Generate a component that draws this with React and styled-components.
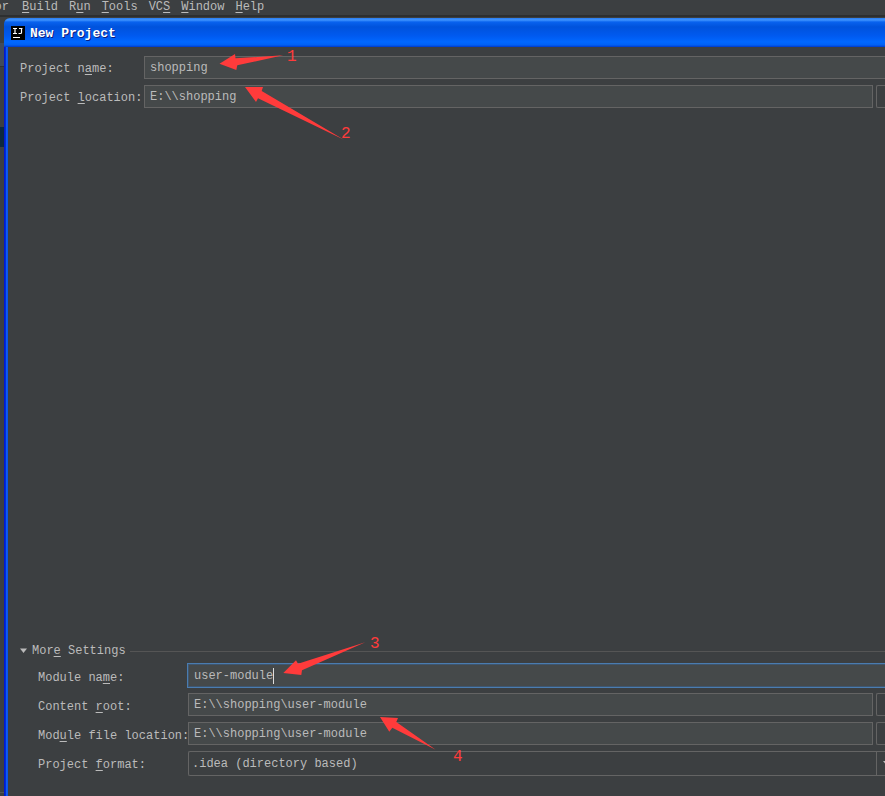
import styled, { createGlobalStyle } from 'styled-components'

const colors = {
  background: '#3c3f41',
  field: '#45494a',
  border: '#646464',
  focus: '#4a7cb0',
  focusInner: '#3f566e',
  text: '#bbbbbb',
  mark: '#ff3b3b',
}

const GlobalStyle = createGlobalStyle`
  * {
    box-sizing: border-box;
  }
  body {
    margin: 0;
    background: ${colors.background};
    color: ${colors.text};
    font: 12px/16px 'Liberation Mono', monospace;
  }
  button, input, select {
    font: inherit;
    color: inherit;
  }
`

const Screen = styled.div`
  display: flex;
  flex-direction: column;
  height: 100vh;
  overflow: hidden;
`

const MenuBar = styled.nav`
  display: flex;
  gap: 11px;
  flex: none;
  height: 17px;
  align-items: flex-start;
  line-height: 14px;
  border-bottom: 2px solid #2d2f30;
`

const MenuItem = styled.button`
  display: flex;
  justify-content: flex-end;
  flex: none;
  width: ${({ $clipped }) => ($clipped ? '11px' : 'auto')};
  padding: 0;
  padding-right: ${({ $clipped }) => ($clipped ? '2px' : 0)};
  border: 0;
  background: none;
`

const Mnemonic = styled.u`
  text-underline-offset: 2px;
  text-decoration-thickness: 1px;
`

const Workspace = styled.div`
  display: flex;
  flex: 1;
  min-height: 0;
`

const Gutter = styled.div`
  display: flex;
  flex-direction: column;
  flex: none;
  width: 4px;
  padding-top: 26px;

  &:after {
    content: '';
    height: 3px;
    margin-top: auto;
    border-top: 1px solid #555555;
  }
`

const GutterTab = styled.div`
  height: 24px;
  background: #414b5b;
  border-bottom: 1px solid #2f3133;
`

const GutterSelection = styled.div`
  height: 20px;
  margin-top: 60px;
  background: #0d293e;
`

const Dialog = styled.section`
  display: flex;
  flex-direction: column;
  flex: 1;
  min-width: 0;
  position: relative;
  margin-top: 1px;
`

const TitleBar = styled.header`
  display: flex;
  align-items: center;
  gap: 5px;
  flex: none;
  height: 29px;
  padding-left: 7px;
  border-radius: 6px 0 0 0;
  background: linear-gradient(
    #2a7cf0 0,
    #3f94ff 2px,
    #0862ee 4px,
    #0052dc 9px,
    #005af0 18px,
    #0068ff 24px,
    #0060f4 27px,
    #0038c8 29px
  );
`

const Title = styled.h1`
  margin: 0;
  padding-top: 2px;
  font-size: 13px;
  line-height: 16px;
  color: #ffffff;
  text-shadow: 1px 1px 0 #0a1c80;
`

const Content = styled.form`
  display: flex;
  flex-direction: column;
  flex: 1;
  min-height: 0;
  padding: 9px 0 20px 12px;
  border-left: 4px solid;
  border-image: linear-gradient(
      to right,
      #0014c8 0,
      #0030e0 2px,
      #1060f4 2px,
      #0a50e8 4px
    )
    4;
`

const Rows = styled.div`
  display: flex;
  flex-direction: column;
  gap: 6px;
  padding-left: ${({ $indent }) => ($indent ? '18px' : 0)};
`

const Row = styled.div`
  display: flex;
`

const Label = styled.label`
  flex: none;
  width: ${({ $wide }) => ($wide ? '150px' : '124px')};
  height: 23px;
  padding-top: ${({ $wide }) => ($wide ? '6px' : '5px')};
  white-space: nowrap;
`

const FieldBox = styled.div`
  position: relative;
  flex: 1;
  min-width: 0;
`

const Field = styled.input`
  display: block;
  width: 100%;
  height: 23px;
  padding: 0 5px;
  border: 1px solid
    ${({ $focused }) => ($focused ? colors.focusInner : colors.border)};
  border-right-width: ${({ $cut }) => ($cut ? 0 : '1px')};
  border-radius: 0;
  outline: 0;
  box-shadow: ${({ $focused }) =>
    $focused ? `0 0 0 1px ${colors.focus}` : 'none'};
  background: ${colors.field};
`

const Caret = styled.span`
  position: absolute;
  top: 4px;
  left: calc(6px + 11ch);
  width: 1px;
  height: 16px;
  background: #dddddd;
`

const BrowseButton = styled.button`
  flex: none;
  width: 9px;
  height: 23px;
  margin-left: 3px;
  padding: 0;
  border: 1px solid ${colors.border};
  border-right: 0;
  border-radius: 2px 0 0 2px;
  background: ${colors.background};
`

const Select = styled.select`
  appearance: none;
  display: block;
  width: 100%;
  height: 25px;
  padding: 0 12px 0 3px;
  border: 1px solid ${colors.border};
  border-right: 0;
  border-radius: 2px 0 0 2px;
  outline: 0;
  background: ${colors.background};
`

const SelectArrow = styled.span`
  display: flex;
  align-items: center;
  position: absolute;
  top: 0;
  right: 0;
  width: 9px;
  height: 25px;
  padding-left: 6px;
  border-left: 1px solid ${colors.border};
  pointer-events: none;
  overflow: hidden;

  svg {
    flex: none;
  }
`

const Spacer = styled.div`
  flex: 1;
`

const SectionToggle = styled.button`
  display: flex;
  align-items: center;
  gap: 4px;
  flex: none;
  margin-bottom: 5px;
  padding: 0;
  border: 0;
  background: none;

  &:after {
    content: '';
    flex: 1;
    height: 1px;
    background: #555555;
  }
`

const Mark = styled.svg`
  position: absolute;
  left: ${({ $left }) => $left}px;
  top: ${({ $top }) => ($top === undefined ? 'auto' : `${$top}px`)};
  bottom: ${({ $bottom }) => ($bottom === undefined ? 'auto' : `${$bottom}px`)};
  overflow: visible;
  pointer-events: none;
  fill: ${colors.mark};
  font: 16px 'Liberation Mono', monospace;
`

// coordinates are relative to the dialog: top marks hang from its top, the others from its bottom
const marks = [
  {
    number: 1,
    left: 215,
    top: 32,
    width: 78,
    height: 24,
    points: '0.5,13.7 16,4 16.5,8.3 64.3,5.3 18.3,15.3 17.3,20',
    x: 68,
    y: 11,
  },
  {
    number: 2,
    left: 241,
    top: 69,
    width: 110,
    height: 53,
    points: '0,0 18,0 16.7,4 99,52.7 13,11.3 11,15',
    x: 96,
    y: 51,
  },
  {
    number: 3,
    left: 279,
    bottom: 116,
    width: 100,
    height: 40,
    points: '0.3,33 13,20.3 15,23.7 82.3,2.3 19,30.3 18.3,35',
    x: 87,
    y: 8,
  },
  {
    number: 4,
    left: 376,
    bottom: 36,
    width: 86,
    height: 44,
    points: '0,1 18,2 16.3,6 55.7,33.7 12.3,11.7 9.3,15.7',
    x: 73,
    y: 45,
  },
]

const menuItems = [
  { before: 'or', clipped: true },
  { key: 'B', after: 'uild' },
  { before: 'R', key: 'u', after: 'n' },
  { key: 'T', after: 'ools' },
  { before: 'VC', key: 'S' },
  { key: 'W', after: 'indow' },
  { key: 'H', after: 'elp' },
]

function Caption({ before, letter, after }) {
  return (
    <span>
      {before}
      {letter && <Mnemonic>{letter}</Mnemonic>}
      {after}
    </span>
  )
}

function TextRow({ id, caption, value, wide, browse, focused }) {
  return (
    <Row>
      <Label htmlFor={id} $wide={wide}>
        <Caption {...caption} />
      </Label>
      <FieldBox>
        <Field
          id={id}
          defaultValue={value}
          spellCheck={false}
          $cut={!browse}
          $focused={focused}
        />
        {focused && <Caret />}
      </FieldBox>
      {browse && <BrowseButton type="button" aria-label="Browse" />}
    </Row>
  )
}

function App() {
  return (
    <Screen>
      <GlobalStyle />
      <MenuBar>
        {menuItems.map(({ before, key, after, clipped }) => (
          <MenuItem key={`${before}-${key}`} type="button" $clipped={clipped}>
            <Caption before={before} letter={key} after={after} />
          </MenuItem>
        ))}
      </MenuBar>
      <Workspace>
        <Gutter>
          <GutterTab />
          <GutterSelection />
        </Gutter>
        <Dialog>
          <TitleBar>
            <svg width="14" height="14" viewBox="0 0 14 14" aria-hidden="true">
              <rect width="14" height="14" fill="#000" />
              <path
                d="M2 2.5h4M4 2.5v5M2 7.5h4M8 2.5h3.5M10.5 2.5v4q0 1-1 1H7.5"
                fill="none"
                stroke="#fff"
                strokeWidth="1.2"
              />
              <path d="M2 11.5h7" stroke="#fff" />
            </svg>
            <Title>New Project</Title>
          </TitleBar>
          <Content onSubmit={(e) => e.preventDefault()}>
            <Rows>
              <TextRow
                id="project-name"
                caption={{ before: 'Project n', letter: 'a', after: 'me:' }}
                value="shopping"
              />
              <TextRow
                id="project-location"
                caption={{ before: 'Project ', letter: 'l', after: 'ocation:' }}
                value="E:\\shopping"
                browse
              />
            </Rows>
            <Spacer />
            <SectionToggle type="button" aria-expanded="true">
              <svg width="8" height="6" viewBox="0 0 8 6" aria-hidden="true">
                <path d="M0 0.5h7l-3.5 4.5z" fill="#bbb" />
              </svg>
              <Caption before="Mor" letter="e" after=" Settings" />
            </SectionToggle>
            <Rows $indent>
              <TextRow
                id="module-name"
                caption={{ before: 'Module na', letter: 'm', after: 'e:' }}
                value="user-module"
                wide
                focused
              />
              <TextRow
                id="content-root"
                caption={{ before: 'Content ', letter: 'r', after: 'oot:' }}
                value="E:\\shopping\user-module"
                wide
                browse
              />
              <TextRow
                id="module-file"
                caption={{ before: 'Mod', letter: 'u', after: 'le file location:' }}
                value="E:\\shopping\user-module"
                wide
                browse
              />
              <Row>
                <Label htmlFor="project-format" $wide>
                  <Caption before="Project " letter="f" after="ormat:" />
                </Label>
                <FieldBox>
                  <Select id="project-format">
                    <option>.idea (directory based)</option>
                  </Select>
                  <SelectArrow>
                    <svg width="8" height="5" viewBox="0 0 8 5" aria-hidden="true">
                      <path d="M0 0h8l-4 5z" fill="#bbb" />
                    </svg>
                  </SelectArrow>
                </FieldBox>
              </Row>
            </Rows>
          </Content>
          {marks.map(({ number, left, top, bottom, width, height, points, x, y }) => (
            <Mark
              key={number}
              $left={left}
              $top={top}
              $bottom={bottom}
              width={width}
              height={height}
            >
              <polygon points={points} />
              <text x={x} y={y}>
                {number}
              </text>
            </Mark>
          ))}
        </Dialog>
      </Workspace>
    </Screen>
  )
}

export default App
